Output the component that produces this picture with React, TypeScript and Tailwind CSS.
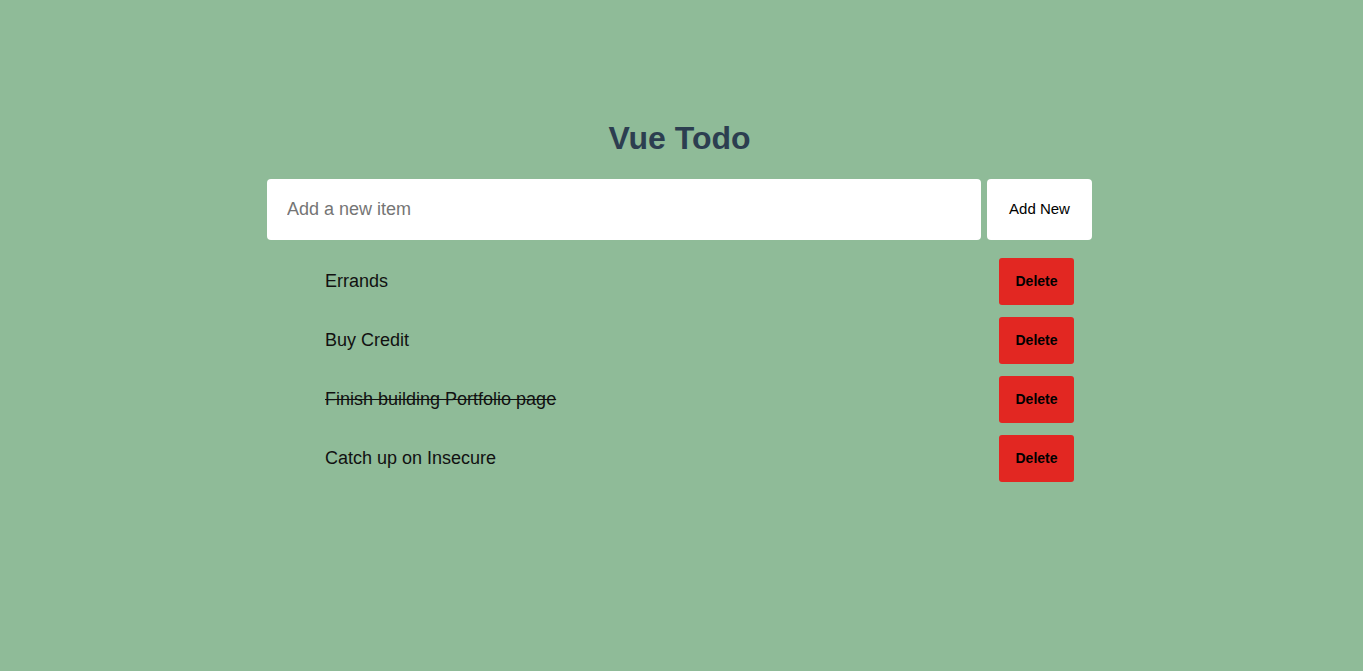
import React, { useState } from 'react';

interface Todo {
    text: string;
    done: boolean;
}

const initial: Todo[] = [
    { text: 'Errands', done: false },
    { text: 'Buy Credit', done: false },
    { text: 'Finish building Portfolio page', done: true },
    { text: 'Catch up on Insecure', done: false },
];

const App: React.FC = () => {
    const [todos, setTodos] = useState<Todo[]>(initial);
    const [value, setValue] = useState('');

    const add = () => {
        if (!value.trim()) return;
        setTodos([...todos, { text: value, done: false }]);
        setValue('');
    };

    return (
        <div className="min-h-screen bg-[#8fbb98] font-['Liberation_Sans',Arial,sans-serif]">
            <div className="mx-auto w-[825px] pt-[120px] -translate-x-[2px]">
                <h1 className="text-center text-[32px] leading-[37px] font-bold text-[#2c3e50]">Vue Todo</h1>

                {/* Input row */}
                <div className="mt-[22px] flex gap-[6px]">
                    <input
                        type="text"
                        value={value}
                        onChange={(e) => setValue(e.target.value)}
                        placeholder="Add a new item"
                        className="h-[61px] flex-1 rounded-[4px] bg-white px-[20px] text-[18px] text-black placeholder:text-[#757575] outline-none"
                    />
                    <button
                        onClick={add}
                        className="h-[61px] w-[105px] rounded-[4px] bg-white text-[15px] text-black"
                    >
                        Add New
                    </button>
                </div>

                {/* List */}
                <ul className="mt-[18px] flex flex-col gap-[12px] px-[18px]">
                    {todos.map((t, i) => (
                        <li key={i} className="flex items-center justify-between pl-[40px]">
                            <span
                                onClick={() => setTodos(todos.map((x, j) => (j === i ? { ...x, done: !x.done } : x)))}
                                className={`text-[18px] text-[#111] cursor-pointer ${t.done ? 'line-through' : ''}`}
                            >
                                {t.text}
                            </span>
                            <button
                                onClick={() => setTodos(todos.filter((_, j) => j !== i))}
                                className="h-[47px] w-[75px] rounded-[3px] bg-[#e22722] text-[14px] font-bold text-black"
                            >
                                Delete
                            </button>
                        </li>
                    ))}
                </ul>
            </div>
        </div>
    );
};

export default App;
